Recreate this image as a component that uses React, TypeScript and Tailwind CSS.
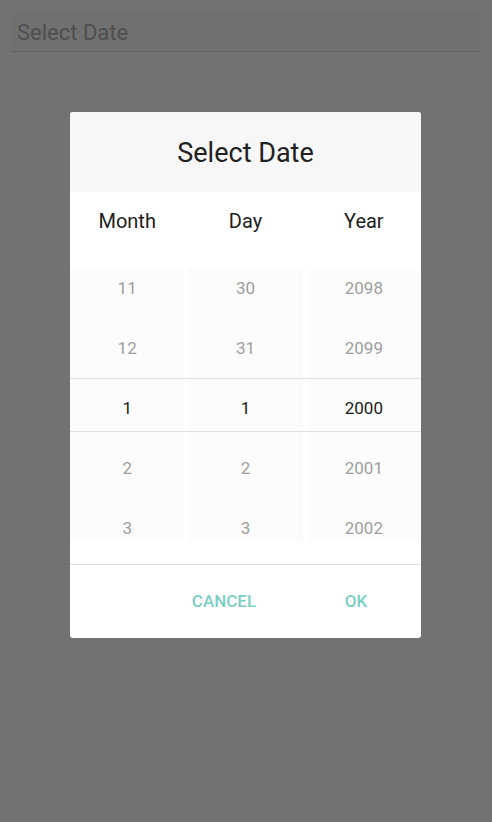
import React from 'react';

const columns = [
  { label: 'Month', values: ['11', '12', '1', '2', '3'] },
  { label: 'Day', values: ['30', '31', '1', '2', '3'] },
  { label: 'Year', values: ['2098', '2099', '2000', '2001', '2002'] },
];

export default function App() {
  return (
    <div
      className="relative min-h-[822px] w-full bg-[#717271]"
      style={{ fontFamily: 'Roboto, "Liberation Sans", sans-serif' }}
    >
      {/* Input behind the dialog */}
      <div className="px-3 pt-3">
        <div className="flex h-[40px] items-center border-b border-[#5f605f] bg-[#6f706f] pl-[5px] pt-[2px] text-[22px] text-[#4e4f4e]">
          Select Date
        </div>
      </div>

      {/* Dialog */}
      <div className="absolute inset-x-0 top-[112px] flex pl-[70px]">
        <div className="w-[351px] overflow-hidden rounded-[3px] bg-white">
          <div className="flex h-[80px] items-center justify-center bg-[#f7f7f7] pt-[2px] text-[27px] text-[#212121]">
            Select Date
          </div>

          <div className="grid h-[58px] grid-cols-3 gap-1 text-[20px] text-[#212121]">
            {columns.map((col) => (
              <div key={col.label} className="flex items-center justify-center">
                {col.label}
              </div>
            ))}
          </div>

          {/* Wheels */}
          <div className="relative mt-[18px] grid h-[274px] grid-cols-3 gap-1">
            {columns.map((col) => (
              <div key={col.label} className="overflow-hidden bg-[#fcfcfc]">
                <div className="-mt-[9px] flex flex-col">
                  {col.values.map((v, i) => (
                    <div
                      key={i}
                      className={
                        i === 2
                          ? 'flex h-[60px] items-center justify-center text-[17px] text-[#1a1a1a]'
                          : 'flex h-[60px] items-center justify-center text-[17px] text-[#9e9e9e]'
                      }
                    >
                      {v}
                    </div>
                  ))}
                </div>
              </div>
            ))}
            <div className="pointer-events-none absolute inset-x-0 top-[110px] h-[54px] border-y border-[#e0e0e0]" />
          </div>

          <div className="mt-[22px] flex h-[74px] items-center justify-end gap-[28px] border-t border-[#e0e0e0] pr-[21px] text-[17px] font-medium text-[#7ccfc4]">
            <button className="flex h-[48px] w-[120px] items-center justify-center">CANCEL</button>
            <button className="flex h-[48px] w-[88px] items-center justify-center">OK</button>
          </div>
        </div>
      </div>
    </div>
  );
}
